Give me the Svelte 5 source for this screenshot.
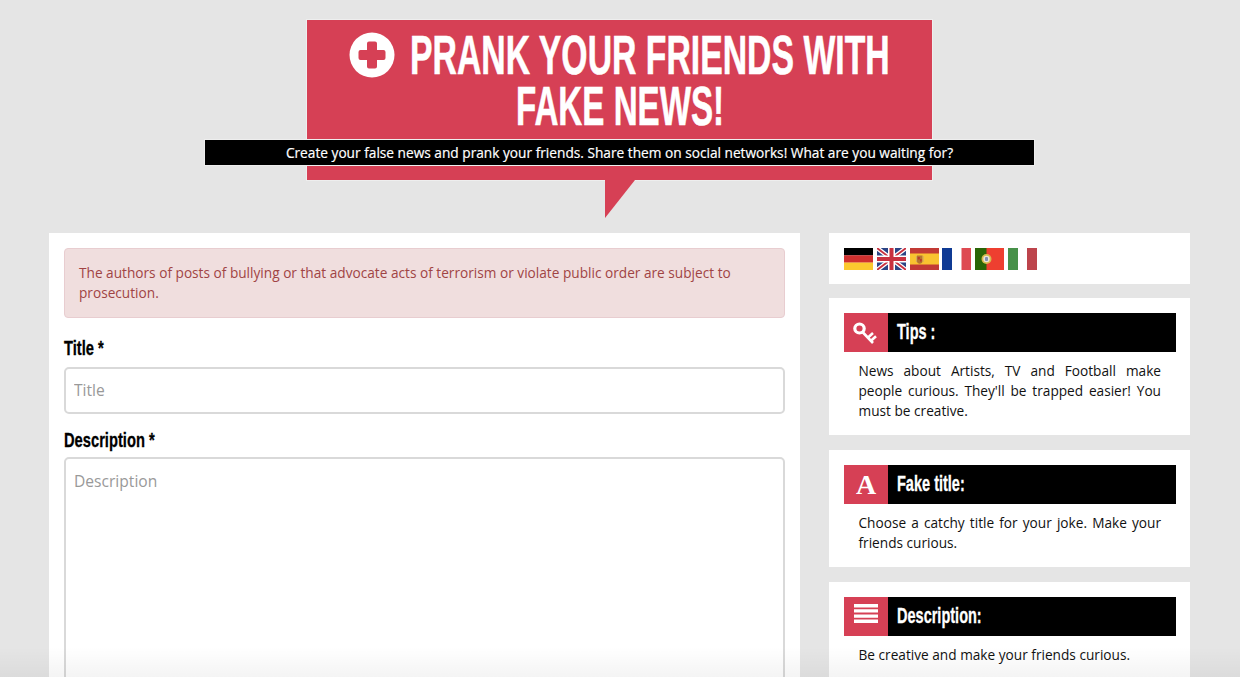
<script>
  const tips = [
    { id: 'key', title: 'Tips :', text: "News about Artists, TV and Football make people curious. They'll be trapped easier! You must be creative." },
    { id: 'font', title: 'Fake title:', text: 'Choose a catchy title for your joke. Make your friends curious.' },
    { id: 'list', title: 'Description:', text: 'Be creative and make your friends curious.' }
  ];
</script>

<div class="page">
  <header class="hero">
    <h1>
      <span class="line first">
        <svg class="plus" viewBox="0 0 46 46" aria-hidden="true">
          <circle cx="23" cy="23" r="22.5" fill="#fff" />
          <path d="M20 9.5h6a2 2 0 0 1 2 2v6.500h6.500a2 2 0 0 1 2 2v6a2 2 0 0 1-2 2H28v6.500a2 2 0 0 1-2 2h-6a2 2 0 0 1-2-2V28h-6.500a2 2 0 0 1-2-2v-6a2 2 0 0 1 2-2H18v-6.500a2 2 0 0 1 2-2z" fill="#d64055" />
        </svg>
        <span class="squeeze w1"><span>PRANK YOUR FRIENDS WITH</span></span>
      </span>
      <span class="line">
        <span class="squeeze w2"><span>FAKE NEWS!</span></span>
      </span>
    </h1>
    <p class="sub">Create your false news and prank your friends. Share them on social networks! What are you waiting for?</p>
    <span class="tail"></span>
  </header>

  <main class="columns">
    <section class="card form">
      <div class="alert">The authors of posts of bullying or that advocate acts of terrorism or violate public order are subject to prosecution.</div>
      <label for="t"><span class="cond">Title *</span></label>
      <input id="t" type="text" placeholder="Title" />
      <label for="d"><span class="cond">Description *</span></label>
      <textarea id="d" placeholder="Description"></textarea>
    </section>

    <aside class="side">
      <div class="card flags">
        <svg viewBox="0 0 29 22"><rect width="29" height="7.400" fill="#000"/><rect y="7.300" width="29" height="7.400" fill="#d0302f"/><rect y="14.600" width="29" height="7.400" fill="#fcc92f"/></svg>
        <svg viewBox="0 0 29 22"><rect width="29" height="22" fill="#2b4485"/><path d="M0 0 29 22M29 0 0 22" stroke="#fff" stroke-width="4.400"/><path d="M0 0 29 22M29 0 0 22" stroke="#c8303f" stroke-width="1.800"/><path d="M14.500 0v22M0 11h29" stroke="#fff" stroke-width="7"/><path d="M14.500 0v22M0 11h29" stroke="#c8303f" stroke-width="4"/></svg>
        <svg viewBox="0 0 29 22"><rect width="29" height="22" fill="#c23a35"/><rect y="5.500" width="29" height="11" fill="#f9c330"/><path d="M7 7.500h5.500v5.500a2.750 2.750 0 0 1-5.500 0z" fill="#b5752f"/><rect x="7.800" y="9" width="2" height="2.500" fill="#bb3a2c"/><rect x="10" y="11" width="1.800" height="2.500" fill="#bb3a2c"/><rect x="6" y="8" width="0.800" height="6" fill="#c9a26a"/><rect x="12.700" y="8" width="0.800" height="6" fill="#c9a26a"/></svg>
        <svg viewBox="0 0 29 22"><rect width="29" height="22" fill="#fff"/><rect x="0" width="10" height="22" fill="#0f3a94"/><rect x="19.500" width="9.500" height="22" fill="#de4a52"/></svg>
        <svg viewBox="0 0 29 22"><rect width="29" height="22" fill="#ee3f30"/><rect width="11.500" height="22" fill="#2a6506"/><circle cx="11.500" cy="11" r="5" fill="#d8bb4f"/><circle cx="11.500" cy="11" r="3.200" fill="#e9e4da"/><rect x="10" y="9" width="3" height="4" rx="1" fill="#7f8fb0"/></svg>
        <svg viewBox="0 0 29 22"><rect width="29" height="22" fill="#fff"/><rect width="10" height="22" fill="#479149"/><rect x="19" width="10" height="22" fill="#bd444c"/></svg>
      </div>

      {#each tips as tip}
        <div class="card tip">
          <div class="tip-head">
            <span class="tip-icon">
              {#if tip.id === 'key'}
                <svg viewBox="0 0 44 39" width="44" height="39" aria-hidden="true">
                  <ellipse cx="15.500" cy="15.500" rx="4.700" ry="4.500" fill="none" stroke="#fff" stroke-width="3.200" />
                  <path d="M18.500 19 29 30M24 24.500l5-4.500M27 27.700l5-4.500" fill="none" stroke="#fff" stroke-width="2.600" />
                </svg>
              {:else if tip.id === 'font'}
                <span class="glyph">A</span>
              {:else}
                <svg class="bars" viewBox="0 0 24 19" width="24" height="19" aria-hidden="true">
                  <path d="M0 1.700h24M0 6.900h24M0 12.100h24M0 17.300h24" stroke="#fff" stroke-width="3.400" />
                </svg>
              {/if}
            </span>
            <h3><span class="cond head">{tip.title}</span></h3>
          </div>
          <p>{tip.text}</p>
        </div>
      {/each}
    </aside>
  </main>
  <div class="fade"></div>
</div>

<style>
  :global(body) {
    margin: 0;
    background: #e5e5e5;
    font-family: "Open Sans", "Noto Sans", sans-serif;
    overflow: hidden;
  }
  .page {
    height: 677px;
    overflow: hidden;
    position: relative;
  }
  .hero {
    position: relative;
    width: 625px;
    height: 160px;
    margin: 20px 0 53px 307px;
    background: #d64055;
    box-shadow: 0 0 0 1px #eee;
    box-sizing: border-box;
    padding-top: 9px;
    text-align: center;
  }
  h1 {
    margin: 0;
    color: #fff;
    font: 700 56px/51px "Liberation Sans", sans-serif;
    height: 111px;
    display: flex;
    flex-direction: column;
    align-items: center;
  }
  .line {
    display: flex;
    align-items: center;
    justify-content: center;
    height: 51px;
  }
  .first { gap: 15px; margin-left: -2px; }
  .plus {
    width: 46px;
    height: 46px;
    display: block;
    flex: none;
  }
  .squeeze {
    display: block;
    white-space: nowrap;
    text-align: left;
  }
  .squeeze > span {
    display: inline-block;
    transform-origin: left center;
    -webkit-text-stroke: 0.6px #fff;
  }
  .w1 { width: 478px; }
  .w1 > span { transform: scaleX(0.603); }
  .w2 { width: 206px; margin-left: -1px; }
  .w2 > span { transform: scaleX(0.592); }
  .cond {
    display: inline-block;
    white-space: nowrap;
    transform-origin: left center;
    transform: scaleX(0.7);
    -webkit-text-stroke: 0.3px currentColor;
  }
  .sub {
    margin: 0 -102px;
    height: 25px;
    background: #000;
    color: #fff;
    font-size: 13.7px;
    font-weight: 500;
    line-height: 25px;
    -webkit-text-stroke: 0.2px #fff;
    box-shadow: 0 0 0 1px #eee;
    position: relative;
  }
  .tail {
    position: absolute;
    left: 298px;
    top: 100%;
    width: 30px;
    height: 38px;
    background: #d64055;
    clip-path: polygon(0 0, 100% 0, 0 100%);
  }
  .columns {
    display: grid;
    grid-template-columns: 751px 361px;
    column-gap: 29px;
    padding-left: 49px;
    align-items: start;
  }
  .card {
    background: #fff;
    box-sizing: border-box;
    padding: 15px 14px 15px 15px;
  }
  .form {
    height: 600px;
    display: flex;
    flex-direction: column;
    padding: 15px;
  }
  .alert {
    background: #f0dede;
    border: 1px solid #e8cdd0;
    border-radius: 4px;
    color: #a04444;
    font-size: 13.66px;
    line-height: 20px;
    padding: 14px;
    height: 70px;
    box-sizing: border-box;
  }
  label {
    font: 700 21px/24px "Liberation Sans", sans-serif;
    color: #000;
    margin-top: 18px;
    margin-bottom: 7px;
  }
  input, textarea {
    border: 2px solid #d9d9d9;
    border-radius: 5px;
    box-sizing: border-box;
    font: 400 15.6px/22px "Open Sans", sans-serif;
    padding: 10px 8px;
    outline: none;
    width: 100%;
    display: block;
    resize: none;
    background: #fff;
  }
  input { height: 47px; padding-bottom: 12px; }
  textarea { height: 320px; padding-top: 11px; }
  label[for="d"] { margin-top: 14px; margin-bottom: 5px; }
  input::placeholder, textarea::placeholder { color: #999; }
  .side {
    display: flex;
    flex-direction: column;
    gap: 15px;
  }
  .flags {
    height: 51px;
    display: flex;
    gap: 3.800px;
    align-items: flex-start;
    margin-bottom: -1px;
  }
  .flags svg {
    width: 29px;
    height: 22px;
    display: block;
    flex: none;
  }
  .tip { padding-bottom: 14px; }
  .tip-head {
    display: flex;
    align-items: stretch;
    height: 39px;
    background: #000;
  }
  .tip-icon {
    width: 44px;
    background: #d64055;
    display: flex;
    align-items: center;
    justify-content: center;
    flex: none;
  }
  .bars { margin-bottom: 6px; }
  .glyph {
    color: #fff;
    font: 700 28px/1 "Liberation Serif", serif;
  }
  h3 {
    margin: 0 0 0 9px;
    color: #fff;
    font: 700 22px/38px "Liberation Sans", sans-serif;
  }
  .head { transform: scaleX(0.66); }
  .tip p {
    margin: 9px 0 0;
    padding: 0 15px 0 14.500px;
    font-size: 13.66px;
    line-height: 20px;
    color: #111;
    text-align: justify;
  }
  .fade {
    position: absolute;
    left: 0;
    right: 0;
    bottom: 0;
    height: 30px;
    background: linear-gradient(rgba(0,0,0,0), rgba(0,0,0,0.045));
    pointer-events: none;
  }
</style>
